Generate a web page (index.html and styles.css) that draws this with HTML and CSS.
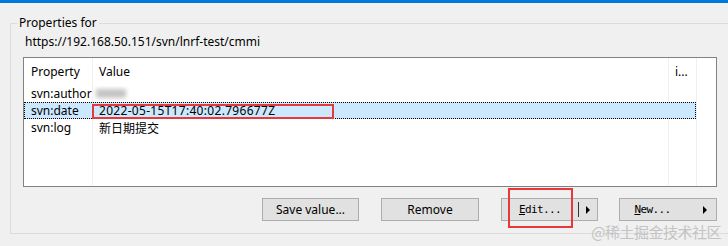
FILE: index.html
```html
<!DOCTYPE html>
<html lang="en">
<head>
    <meta charset="UTF-8">
    <meta name="viewport" content="width=device-width, initial-scale=1.0">
    <title>Properties</title>
    <link rel="stylesheet" href="styles.css">
</head>
<body>
    <div class="titlebar"></div>
    <fieldset class="group">
        <legend>Properties for</legend>
        <div class="url">https://192.168.50.151/svn/lnrf-test/cmmi</div>
        <div class="list">
            <div class="row head">
                <span>Property</span>
                <span>Value</span>
                <span>i...</span>
            </div>
            <div class="row">
                <span>svn:author</span>
                <span><i class="blur"></i></span>
                <span></span>
            </div>
            <div class="row selected">
                <span>svn:date</span>
                <span class="marked"><b class="date">2022-05-15T17:40:02.796677Z</b></span>
                <span></span>
            </div>
            <div class="row">
                <span>svn:log</span>
                <span class="cjk">新日期提交</span>
                <span></span>
            </div>
        </div>
        <div class="actions">
            <button class="btn save">Save value...</button>
            <button class="btn remove">Remove</button>
            <button class="btn split edit">
                <span class="label mono"><u>E</u>dit...</span>
                <span class="sep"></span>
                <span class="arrow"></span>
                <span class="highlight"></span>
            </button>
            <button class="btn split new">
                <span class="label mono"><u>N</u>ew...</span>
                <span class="arrow"></span>
            </button>
        </div>
    </fieldset>
    <div class="watermark">@稀土掘金技术社区</div>
</body>
</html>
```

FILE: styles.css
```css
body {
    margin: 0;
    background: #f0f0f0;
    font-family: "Noto Sans", "Noto Sans CJK SC", sans-serif;
    font-size: 12px;
    color: #000;
    overflow: hidden;
    height: 246px;
    position: relative;
}
.titlebar {
    height: 3px;
    background: #0078d7;
}
.group {
    margin: 12px 0 0 10px;
    padding: 0 0 12px 12px;
    border: 1px solid #dcdcdc;
    border-right: 0;
    min-width: 0;
}
.group legend {
    padding: 0 2px;
    margin-left: -6px;
    line-height: 16px;
}
.url {
    margin: 3px 0 0 2px;
    line-height: 16px;
}
.list {
    width: 692px;
    height: 128px;
    margin-top: 7px;
    border: 1px solid #828282;
    background-color: #fff;
    background-image:
        linear-gradient(#f0f0f0, #f0f0f0),
        linear-gradient(#f0f0f0, #f0f0f0),
        linear-gradient(#f0f0f0, #f0f0f0);
    background-size: 1px 100%;
    background-repeat: no-repeat;
    background-position: 68px 0, 644px 0, 672px 0;
}
.row {
    display: grid;
    grid-template-columns: 68px 576px 28px;
    width: 672px;
    height: 17px;
    line-height: 15px;
    box-sizing: border-box;
    border: 1px solid transparent;
}
.row span {
    padding-left: 6px;
    white-space: nowrap;
    overflow: hidden;
}
.row.head {
    height: 27px;
    line-height: 25px;
}
.row.selected {
    background: #cce8ff;
    border: 1px dotted #000;
}
.blur {
    display: inline-block;
    width: 30px;
    height: 9px;
    margin: 3px 0 0 -3px;
    background: #c4c4c4;
    filter: blur(2px);
    vertical-align: top;
}
.marked {
    position: relative;
    overflow: visible !important;
}
.marked::after {
    content: "";
    position: absolute;
    left: -1px;
    top: 1px;
    width: 242px;
    height: 15px;
    box-sizing: border-box;
    border: 2px solid #e5393b;
}
.date {
    font-weight: normal;
    letter-spacing: 0.3px;
}
.cjk {
    font-family: "Noto Sans CJK SC", sans-serif;
}
.actions {
    display: flex;
    justify-content: flex-end;
    gap: 22px;
    width: 694px;
    margin-top: 11px;
}
.btn {
    height: 23px;
    padding: 0;
    border: 1px solid #adadad;
    background: #e1e1e1;
    font-family: "Noto Sans", sans-serif;
    font-size: 12px;
    color: #000;
}
.save {
    width: 97px;
}
.remove {
    width: 98px;
}
.edit {
    width: 97px;
}
.new {
    width: 98px;
    margin-left: -1px;
}
.split {
    display: flex;
    align-items: center;
    position: relative;
}
.mono {
    font-family: "DejaVu Sans Mono", monospace;
    font-size: 11px;
    letter-spacing: -0.6px;
}
.label {
    flex: 1;
    text-align: center;
}
.edit .label {
    padding-left: 0;
}
.new .label {
    padding-left: 2px;
}
.sep {
    width: 1px;
    height: 15px;
    background: #333;
    margin-right: 7px;
}
.arrow {
    width: 0;
    height: 0;
    border-top: 4px solid transparent;
    border-bottom: 4px solid transparent;
    border-left: 4px solid #000;
    margin-right: 7px;
}
.new .arrow {
    margin: 0 9px 0 20px;
}
.highlight {
    position: absolute;
    left: 6px;
    top: -11px;
    width: 65px;
    height: 40px;
    box-sizing: border-box;
    border: 2px solid #e5393b;
}
.watermark {
    position: absolute;
    right: 7px;
    bottom: 5px;
    font-family: "Noto Sans CJK SC", sans-serif;
    font-size: 15px;
    line-height: 18px;
    color: #c3c3c3;
    letter-spacing: -0.5px;
}
```
